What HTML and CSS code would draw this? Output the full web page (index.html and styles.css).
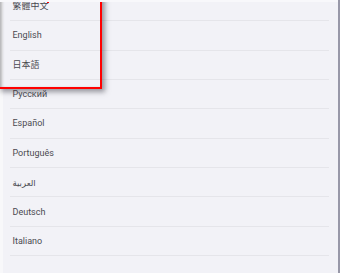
FILE: index.html
```html
<!DOCTYPE html>
<html>
<head>
<meta charset="utf-8">
<link rel="stylesheet" href="styles.css">
</head>
<body>
<div class="page">
  <div class="screen">
    <ul class="langs">
      <li class="row">繁體中文</li>
      <li class="row">English</li>
      <li class="row">日本語</li>
      <li class="row">Русский</li>
      <li class="row">Español</li>
      <li class="row">Português</li>
      <li class="row ar">العربية</li>
      <li class="row">Deutsch</li>
      <li class="row">Italiano</li>
      <li class="row last"></li>
    </ul>
    <div class="highlight"></div>
    <div class="dot"></div>
  </div>
  <div class="edge"></div>
</div>
</body>
</html>
```
FILE: styles.css
```css
html, body {
  margin: 0;
  padding: 0;
  background: #ffffff;
  overflow: hidden;
}
.page {
  display: flex;
  width: 342px;
  height: 273px;
}
.screen {
  position: relative;
  width: 338px;
  height: 273px;
  background: #f2f2f7;
  border-top: 2px solid #f8f8fb;
  box-sizing: border-box;
  overflow: hidden;
  box-shadow: inset 3px 0 0 #f8f8fa;
}
.edge {
  width: 2px;
  height: 273px;
  background: #9898a8;
}
.langs {
  list-style: none;
  margin: -10.2px 0 0 0;
  padding: 0 9.5px 0 10px;
}
.row {
  height: 29.36px;
  box-sizing: border-box;
  border-bottom: 1px solid #e5e5ea;
  padding-left: 2.5px;
  display: flex;
  align-items: center;
  font-family: Roboto, "Noto Sans CJK SC", sans-serif;
  font-size: 9px;
  color: #4a4a50;
}
.row.ar {
  font-family: "Noto Sans", "DejaVu Sans", sans-serif;
  font-size: 8.5px;
}
.row.last {
  border-bottom: none;
}
.highlight {
  position: absolute;
  left: 0;
  top: -10px;
  width: 102px;
  height: 97px;
  box-sizing: border-box;
  border: 2px solid #ff0000;
  border-left: none;
  box-shadow: 2px 2px 5px 1px rgba(60, 60, 70, 0.5), inset 3px 0 3px -1px rgba(0, 0, 0, 0.28);
}
.dot {
  position: absolute;
  left: 47px;
  top: -2px;
  width: 2px;
  height: 3px;
  background: #ff0000;
}
```
